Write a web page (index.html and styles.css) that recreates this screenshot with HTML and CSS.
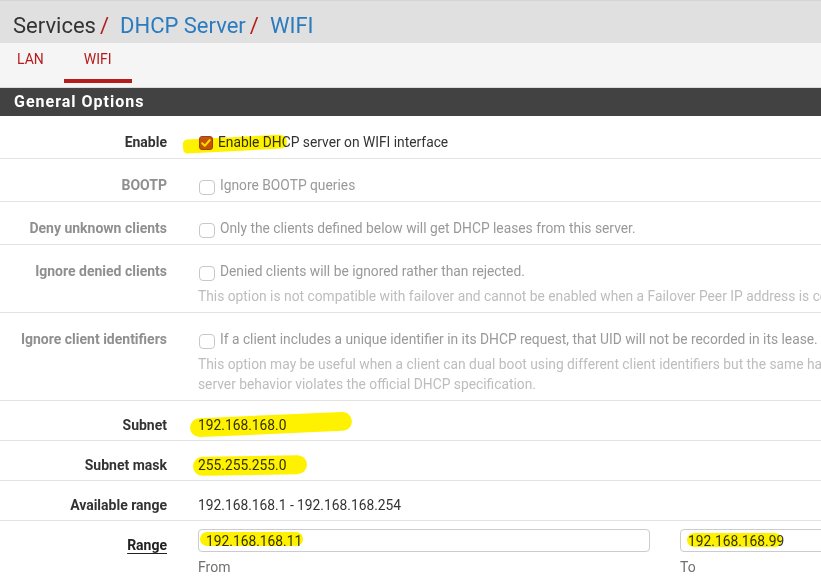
FILE: index.html
```html
<!DOCTYPE html>
<html lang="en">
<head>
  <meta charset="UTF-8">
  <title>Services / DHCP Server / WIFI</title>
  <link rel="stylesheet" href="styles.css">
</head>
<body>
  <div class="page">
    <header class="page-header">
      <h1 class="breadcrumb">Services<span class="sep">/</span><a href="#">DHCP Server</a><span class="sep">/</span><a href="#">WIFI</a></h1>
    </header>

    <nav class="tabs">
      <a class="tab" href="#">LAN</a>
      <a class="tab active" href="#">WIFI</a>
    </nav>

    <section class="panel">
      <h2 class="panel-title">General Options</h2>

      <div class="form-row">
        <div class="label">Enable</div>
        <div class="field">
          <label class="check">
            <span class="box checked">
              <svg viewBox="0 0 14 14" width="14" height="14"><rect x="0.5" y="0.5" width="13" height="13" rx="2.5" fill="#c4561d" stroke="#9c4214"/><path d="M3.2 7.2 L5.8 9.8 L10.8 4" fill="none" stroke="#f6ea2c" stroke-width="2" stroke-linecap="round" stroke-linejoin="round"/></svg>
            </span>
            Enable DHCP server on WIFI interface
          </label>
          <span class="marker m-enable"></span>
        </div>
      </div>

      <div class="form-row disabled">
        <div class="label">BOOTP</div>
        <div class="field">
          <label class="check"><span class="box"></span>Ignore BOOTP queries</label>
        </div>
      </div>

      <div class="form-row disabled">
        <div class="label">Deny unknown clients</div>
        <div class="field">
          <label class="check"><span class="box"></span>Only the clients defined below will get DHCP leases from this server.</label>
        </div>
      </div>

      <div class="form-row disabled">
        <div class="label">Ignore denied clients</div>
        <div class="field">
          <label class="check"><span class="box"></span>Denied clients will be ignored rather than rejected.</label>
          <p class="help">This option is not compatible with failover and cannot be enabled when a Failover Peer IP address is configured.</p>
        </div>
      </div>

      <div class="form-row disabled">
        <div class="label">Ignore client identifiers</div>
        <div class="field">
          <label class="check"><span class="box"></span>If a client includes a unique identifier in its DHCP request, that UID will not be recorded in its lease.</label>
          <p class="help">This option may be useful when a client can dual boot using different client identifiers but the same hardware (MAC) address. Note that the resulting<br>server behavior violates the official DHCP specification.</p>
        </div>
      </div>

      <div class="form-row static">
        <div class="label">Subnet</div>
        <div class="field">192.168.168.0<span class="marker m-subnet"></span></div>
      </div>

      <div class="form-row static">
        <div class="label">Subnet mask</div>
        <div class="field">255.255.255.0<span class="marker m-mask"></span></div>
      </div>

      <div class="form-row static">
        <div class="label">Available range</div>
        <div class="field">192.168.168.1 - 192.168.168.254</div>
      </div>

      <div class="form-row range">
        <div class="label"><span class="req">Range</span></div>
        <div class="range-col">
          <div class="input-wrap">
            <input type="text" value="192.168.168.11">
            <span class="marker m-from"></span>
          </div>
          <div class="sub">From</div>
        </div>
        <div class="range-col">
          <div class="input-wrap">
            <input type="text" value="192.168.168.99">
            <span class="marker m-to"></span>
          </div>
          <div class="sub">To</div>
        </div>
      </div>
    </section>
  </div>
</body>
</html>
```

FILE: styles.css
```css
html, body {
  overflow: hidden;
}
body {
  margin: 0;
  font-family: Roboto, "Liberation Sans", Arial, sans-serif;
  font-size: 14px;
  line-height: 20px;
  color: #333;
  background-color: #fff;
}
.page {
  width: 1100px;
}

/* Titre */
.page-header {
  height: 42px;
  background-color: #e0e0e0;
  border-top: 1px solid #d4d4d4;
}
.breadcrumb {
  margin: 0;
  padding: 12px 0 0 13px;
  font-size: 22px;
  font-weight: 400;
  line-height: 26px;
  color: #333;
}
.breadcrumb a {
  color: #2a7bbf;
  text-decoration: none;
}
.breadcrumb .sep {
  color: #b71c1c;
  margin: 0 11px 0 4px;
}

/* Onglets */
.tabs {
  display: flex;
  height: 44px;
  background-color: #f5f5f5;
  border-bottom: 1px solid #dcdcdc;
}
.tab {
  display: block;
  height: 30px;
  padding: 6px 20px 0 20px;
  color: #b71c1c;
  text-decoration: none;
  border-bottom: 4px solid transparent;
}
.tab:first-child {
  padding-left: 17px;
}
.tab.active {
  border-bottom-color: #b71c1c;
}

/* Panneau */
.panel-title {
  margin: 0;
  height: 28px;
  padding-left: 14px;
  background-color: #424242;
  color: #fff;
  font-size: 16px;
  font-weight: 700;
  line-height: 28px;
  letter-spacing: 1px;
}
.form-row {
  display: flex;
  padding: 16px 0 6px;
  border-bottom: 1px solid #e3e3e3;
}
.form-row.static {
  padding: 14px 0 5px;
}
.form-row.range {
  padding: 8px 0 0;
  border-bottom: none;
}
.label {
  flex: 0 0 167px;
  padding-right: 16px;
  text-align: right;
  font-weight: 700;
  color: #333;
}
.field {
  position: relative;
  flex: 1;
  padding-left: 15px;
  font-size: 13.8px;
  color: #333;
  white-space: nowrap;
}
.disabled .label {
  color: #8f8f8f;
}
.disabled .field {
  color: #999;
}

.check {
  display: flex;
  align-items: flex-start;
}
.box {
  flex: 0 0 14px;
  width: 12px;
  height: 13px;
  margin: 5px 5px 0 1px;
  border: 1px solid #c8c8c8;
  border-radius: 4px;
  background-color: #fff;
}
.box.checked {
  width: 14px;
  height: 14px;
  border: none;
  margin-top: 4px;
}
.box svg {
  display: block;
}
.help {
  margin: 5px 0 0;
  color: #bdbdbd;
}

/* Plage */
.range .label {
  padding-top: 6px;
}
.req {
  color: #222;
  text-decoration: underline;
  text-underline-offset: 3px;
}
.range-col {
  flex: 0 0 452px;
  padding: 0 15px;
}
.input-wrap {
  position: relative;
}
.range-col input {
  display: block;
  box-sizing: border-box;
  width: 100%;
  height: 23px;
  padding: 0 7px;
  border: 1px solid #ccc;
  border-radius: 4px;
  font-family: inherit;
  font-size: 13.8px;
  color: #333;
  background-color: #fff;
}
.sub {
  margin-top: 5px;
  color: #707070;
}

/* Surligneur jaune */
.marker {
  position: absolute;
  background-color: #fff200;
  mix-blend-mode: multiply;
  border-radius: 10px;
  pointer-events: none;
}
.m-enable {
  left: 0;
  top: 5px;
  width: 104px;
  height: 14px;
  border-radius: 8px 14px 12px 8px;
  transform: rotate(-3deg);
}
.m-subnet {
  left: 7px;
  top: 0;
  width: 162px;
  height: 19px;
  border-radius: 12px;
  transform: rotate(-2.5deg);
}
.m-mask {
  left: 10px;
  top: 1px;
  width: 114px;
  height: 19px;
  border-radius: 12px;
  transform: rotate(-1deg);
}
.m-from {
  left: 2px;
  top: 3px;
  width: 103px;
  height: 14px;
  border-radius: 8px;
}
.m-to {
  left: 7px;
  top: 4px;
  width: 95px;
  height: 14px;
  border-radius: 8px;
}
```
